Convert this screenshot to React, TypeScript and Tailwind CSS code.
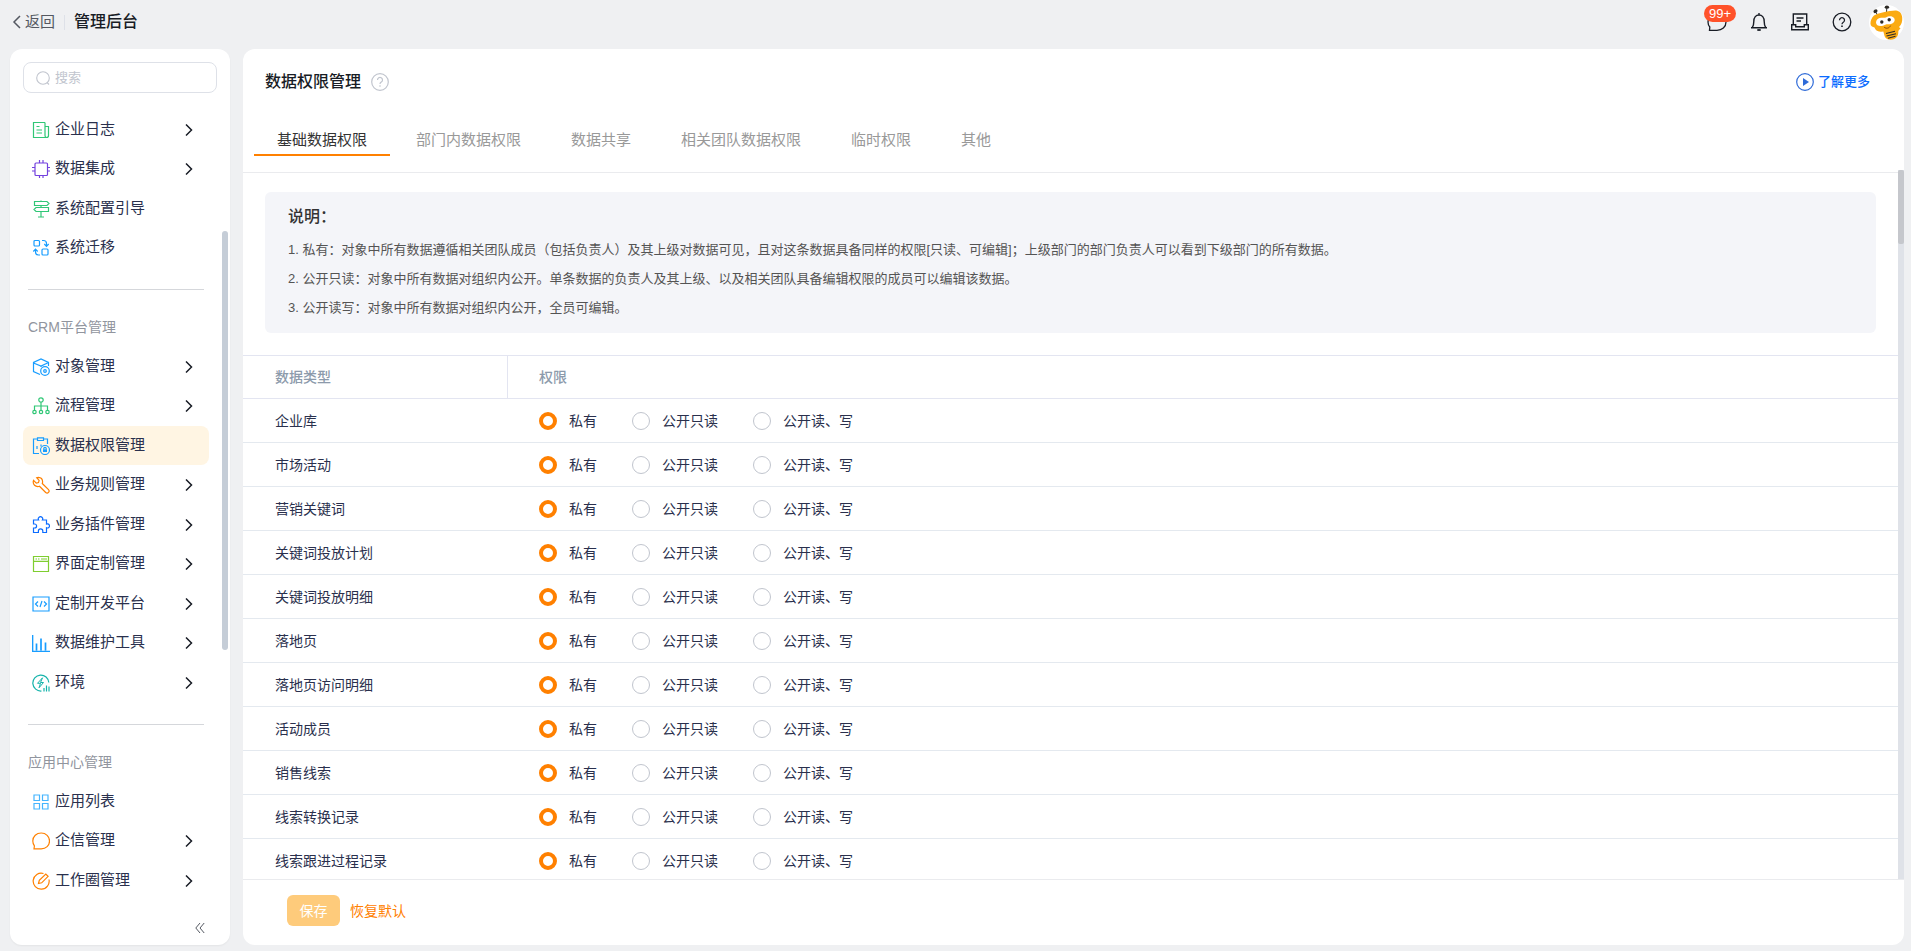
import { useState } from "react";
import type { ReactNode } from "react";
import clsx from "clsx";

type NavItem = {
  label: string;
  icon: ReactNode;
  color: string;
  arrow?: boolean;
  active?: boolean;
};

const icons = {
  log: (
    <>
      <path d="M13 1.5H1.5v15h13a2 2 0 0 0 2-2V5.5H13" />
      <path d="M13 1.5v13a2 2 0 0 0 1.500 2" />
      <path d="M4.500 5.500h3M4.500 9h5.500M4.500 12h5.500" />
    </>
  ),
  chip: (
    <>
      <rect x="3" y="3" width="12.500" height="12.500" rx="1" />
      <path d="M7.500 0v3M11 0v3M7.500 15.500v2.500M11 15.500v2.500M0 7.500h3M0 11h3M15.500 7.500H18M15.500 11H18" />
    </>
  ),
  sign: (
    <>
      <path d="M9 .5v1M2.500 1.500H15l2 2-2 2H2.500zM16.500 7.500H4l-2 2 2 2h12.500zM9 5.500v2M9 11.500V17M6 17h6" />
    </>
  ),
  migrate: (
    <>
      <rect x="2" y="1.500" width="5.500" height="5.500" rx="1" />
      <rect x="10" y="10" width="6" height="6" rx="1" />
      <path d="M10 1.500h1.500a3 3 0 0 1 3 3V7M12.300 5l2.200 2.300L16.700 5" />
      <path d="M8 16H6.500a3 3 0 0 1-3-3v-2.500M1.300 12.500l2.200-2.300 2.200 2.300" />
    </>
  ),
  object: (
    <>
      <path d="M16.500 8V4.500L9 1 1.500 4.500v9L8 16.500M1.500 5 9 8l7.500-3.500M9 8v1" />
      <circle cx="13" cy="13" r="4.300" />
      <circle cx="13" cy="13" r="1.300" />
    </>
  ),
  flow: (
    <>
      <circle cx="9" cy="3" r="2.200" />
      <circle cx="2.500" cy="15" r="1.700" />
      <circle cx="9" cy="15" r="1.700" />
      <circle cx="15.500" cy="15" r="1.700" />
      <path d="M9 5.200v8M2.500 13.200V9h13v4.200" />
    </>
  ),
  permission: (
    <>
      <path d="M5 2H1.500v14.500H7M12 2h3.500v5M5.500.800h6v2.700h-6zM5 9v3M9 7.500v2" />
      <circle cx="13" cy="13" r="4.500" />
      <rect x="11" y="12.300" width="4" height="2.700" fill="currentColor" strokeWidth="0" />
      <path d="M11.800 12.500v-1a1.200 1.200 0 0 1 2.400 0v1" />
    </>
  ),
  wrench: (
    <path d="M6.300 1.300C8.800 1.400 10.600 3.300 10.600 5.800c0 .6-.1 1.200-.3 1.700l6.200 6.200c1.700 1.900-.8 4.500-2.800 2.800L7.500 10.300c-.5.200-1.100.3-1.700.3-2.600 0-4.600-2-4.600-4.500 0-.6.100-1.200.3-1.700L4.300 7.200l2.200-.6.600-2.200L4.600 1.700c.5-.3 1.100-.4 1.700-.4z" />
  ),
  puzzle: (
    <path d="M1.500 4H6.600A2.200 2.200 0 1 1 10.400 4H14.500V8A2.100 2.100 0 1 1 14.500 11.800V16.500H10.800V15A2.200 2.200 0 0 0 6.400 15V16.500H1.500V12H2.600A2 2 0 0 0 2.600 8H1.500Z" />
  ),
  window: (
    <>
      <path d="M1.500 1.500h15v15h-15zM1.500 6.300h15" />
      <path d="M3.500 4h1.500M6 4h1.500M9 4h6" />
    </>
  ),
  code: (
    <>
      <path d="M1 2h16v14H1z" />
      <path d="M6 6.500 3.500 9 6 11.500M12 6.500 14.500 9 12 11.500M10 6l-2 6" />
    </>
  ),
  chart: (
    <path
      d="M.5 1v16.500H18M4.500 16.500V9.500M9 16.500V4.500M13.500 16.500V8.500"
      strokeWidth="1.700"
    />
  ),
  env: (
    <>
      <path d="M9.500 17A8 8 0 1 1 16.800 8.500" />
      <path d="M10.500 3.800 5.500 9.300h3L7 13.800M7 13.800 11.500 8.500h-3L10.500 3.800" strokeWidth="1" />
      <path d="M12 14v3.500M14.500 11.500v6M17 12.500v5" />
    </>
  ),
  grid: (
    <path d="M2 2h5.500v5.500H2zM10.500 2H16v5.500h-5.500zM2 10.500h5.500V16H2zM10.500 10.500H16V16h-5.500z" />
  ),
  chat: (
    <path d="M2 16.800h7.200C14 16.800 17.500 13.500 17.500 9S14 1 9.200 1C4.500 1 .8 4.300.8 9c0 2 .6 3.500 1.600 4.800z" />
  ),
  edit: (
    <>
      <path d="M11.500 1.500A8 8 0 1 0 17 7.500" />
      <path d="m6.500 11.500.8-3.200 6.500-6.300 2.300 2.300-6.400 6.500z" />
    </>
  ),
};

const groups: { title?: string; items: NavItem[] }[] = [
  {
    items: [
      { label: "企业日志", icon: icons.log, color: "text-[#30c776]", arrow: true },
      { label: "数据集成", icon: icons.chip, color: "text-[#7341de]", arrow: true },
      { label: "系统配置引导", icon: icons.sign, color: "text-[#30c776]" },
      { label: "系统迁移", icon: icons.migrate, color: "text-[#189dff]" },
    ],
  },
  {
    title: "CRM平台管理",
    items: [
      { label: "对象管理", icon: icons.object, color: "text-[#189dff]", arrow: true },
      { label: "流程管理", icon: icons.flow, color: "text-[#30c776]", arrow: true },
      { label: "数据权限管理", icon: icons.permission, color: "text-[#189dff]", active: true },
      { label: "业务规则管理", icon: icons.wrench, color: "text-[#ff8000]", arrow: true },
      { label: "业务插件管理", icon: icons.puzzle, color: "text-[#0c6cff]", arrow: true },
      { label: "界面定制管理", icon: icons.window, color: "text-[#7fce30]", arrow: true },
      { label: "定制开发平台", icon: icons.code, color: "text-[#189dff]", arrow: true },
      { label: "数据维护工具", icon: icons.chart, color: "text-[#189dff]", arrow: true },
      { label: "环境", icon: icons.env, color: "text-[#16b4ab]", arrow: true },
    ],
  },
  {
    title: "应用中心管理",
    items: [
      { label: "应用列表", icon: icons.grid, color: "text-[#45b5ff]" },
      { label: "企信管理", icon: icons.chat, color: "text-[#ff8000]", arrow: true },
      { label: "工作圈管理", icon: icons.edit, color: "text-[#ff8000]", arrow: true },
    ],
  },
];

const tabs = ["基础数据权限", "部门内数据权限", "数据共享", "相关团队数据权限", "临时权限", "其他"];

const notes = [
  "1. 私有：对象中所有数据遵循相关团队成员（包括负责人）及其上级对数据可见，且对这条数据具备同样的权限[只读、可编辑]；上级部门的部门负责人可以看到下级部门的所有数据。",
  "2. 公开只读：对象中所有数据对组织内公开。单条数据的负责人及其上级、以及相关团队具备编辑权限的成员可以编辑该数据。",
  "3. 公开读写：对象中所有数据对组织内公开，全员可编辑。",
];

const rows = [
  "企业库",
  "市场活动",
  "营销关键词",
  "关键词投放计划",
  "关键词投放明细",
  "落地页",
  "落地页访问明细",
  "活动成员",
  "销售线索",
  "线索转换记录",
  "线索跟进过程记录",
];

const options = ["私有", "公开只读", "公开读、写"];

const Bee = () => (
  <svg viewBox="0 0 35 35" className="size-[35px]">
    <circle cx="17.500" cy="17.500" r="17.500" fill="#fff" />
    <path d="M6.500 6.500 9 11M17.800 2.500 17.500 8" stroke="#333" strokeWidth="1" fill="none" />
    <ellipse cx="6.500" cy="6.200" rx="2.200" ry="1.700" fill="#2d2a26" transform="rotate(-35 6.500 6.200)" />
    <ellipse cx="17.900" cy="2.200" rx="2.200" ry="1.600" fill="#2d2a26" />
    <path d="M14 25l13-5c1.500 1.500 3.500 2 4.500 3.500-1 1-1.800 1.500-2.200 2.800.3 3.500-1 6.200-4 7.700-3.500 1.200-7 .8-9-1.500-1-1.500-1.300-4-2.300-7.500z" fill="#fbab12" />
    <path d="M1.500 19c-.3-3 1.200-6.500 3.500-8.500C8.500 8.300 21 5.300 27 5.500c3.500.3 5.800 3 6.200 7 .3 4-.7 7-2.700 9-4 3-14 5.500-19 5.200-3.700-.3-4.900-1.700-6-4.200-1.500-.5-3.800-1-4-3.500z" fill="#fbab12" />
    <path d="M7 17.500c0-2.500 2-4.300 5-4.700 2-.2 3 .3 5-.4 2.200-1.200 6.200-1.800 8 .6 1.600 2.200.3 5.200-3 6-2.500.6-3.700-.2-5.700.7-3.600 2.200-9.300 1.800-9.300-2.200z" fill="#fff" />
    <circle cx="12.800" cy="17" r="1.700" fill="#2d2a26" />
    <circle cx="20.200" cy="14.700" r="1.700" fill="#2d2a26" />
    <path d="M15.500 22.500c2 1.500 4.700.8 5.900-1.500" stroke="#8a4b0a" strokeWidth="1" fill="none" strokeLinecap="round" />
    <path d="M17 28.500 26 26.300M17.500 31 27 28.700M19 33.200 26.500 31.200" stroke="#2d2a26" strokeWidth="1.100" fill="none" />
  </svg>
);

const TopBar = () => (
  <header className="flex h-[49px] shrink-0 items-start justify-between pl-3 pr-[7px]">
    <div className="flex h-[44px] items-center">
      <button type="button" className="flex items-center gap-1 text-[15px] text-[#545861]">
        <svg viewBox="0 0 9 14" className="h-[14px] w-[9px]" fill="none" stroke="currentColor" strokeWidth="1.500">
          <path d="M8 1 2 7l6 6" />
        </svg>
        返回
      </button>
      <span className="ml-[9px] h-[15px] w-px bg-[#dee1e8]" />
      <h1 className="ml-[9px] text-base font-medium text-[#181c25]">管理后台</h1>
    </div>
    <div className="flex h-[44px] items-center text-[#181c25]">
      <button type="button" aria-label="消息" className="relative mr-[22px] size-5">
        <svg viewBox="0 0 20 20" className="size-5" fill="none" stroke="currentColor" strokeWidth="1.300">
          <path d="M2.500 18.300H10c5 0 9-3.300 9-8.300s-4-8-9-8-9 3.300-9 8c0 2 .7 3.800 1.800 5z" />
        </svg>
        <span className="absolute -left-[3px] -top-[7px] flex h-[17px] items-center rounded-full bg-[#ff522a] px-[5px] text-[13px] text-white">
          99+
        </span>
      </button>
      <button type="button" aria-label="通知" className="mr-[21px]">
        <svg viewBox="0 0 20 20" className="size-5" fill="none" stroke="currentColor" strokeWidth="1.400">
          <path d="M10 1v2M2 15.700h16M3.300 15.500c1.300-2 1.500-3.500 1.500-6C4.800 5.500 7 3 10 3s5.200 2.500 5.200 6.500c0 2.500.2 4 1.500 6" />
          <path d="M8.300 18h3.400" strokeWidth="1.800" />
        </svg>
      </button>
      <button type="button" aria-label="待办" className="mr-[22px]">
        <svg viewBox="0 0 20 20" className="size-5" fill="none" stroke="currentColor" strokeWidth="1.400">
          <path d="M3.300 12.500V2h13.400v10.500M6.500 6h7M6.500 9h4.500M1.700 12.700h4v2h8.600v-2h4v5H1.700z" />
        </svg>
      </button>
      <button type="button" aria-label="帮助" className="mr-[17px]">
        <svg viewBox="0 0 20 20" className="size-5" fill="none" stroke="currentColor" strokeWidth="1.300">
          <circle cx="10" cy="10" r="8.800" />
          <path d="M7.500 8.200a2.500 2.500 0 1 1 3.800 2.100c-.8.500-1.300 1-1.300 2" />
          <path d="M10 13.500v1.500" strokeWidth="1.600" />
        </svg>
      </button>
      <button type="button" aria-label="头像">
        <Bee />
      </button>
    </div>
  </header>
);

const Sidebar = () => (
  <aside className="relative flex w-[220px] shrink-0 flex-col overflow-hidden rounded-xl bg-white px-[13px] pt-[13px] shadow-xs">
    <label className="flex h-[31px] shrink-0 items-center gap-[5px] rounded-lg border border-[#dee1e8] px-3 text-[#c1c5ce]">
      <svg viewBox="0 0 14 14" className="size-[14px] shrink-0" fill="none" stroke="currentColor" strokeWidth="1.100">
        <circle cx="7" cy="7" r="6.300" />
        <path d="m11 11.500 2 2" />
      </svg>
      <input type="text" placeholder="搜索" className="min-w-0 flex-1 text-[13px] outline-none placeholder:text-[#c1c5ce]" />
    </label>
    <nav className="mt-[17px] min-h-0 flex-1 overflow-hidden">
      {groups.map((group, i) => (
        <div key={i}>
          {group.title && (
            <>
              <hr className="ml-[5px] mr-[13px] mt-[22px] border-[#d5d7db]" />
              <h2 className="mb-[10px] ml-[5px] mt-[27px] text-sm text-[#91959e]">{group.title}</h2>
            </>
          )}
          <ul>
            {group.items.map((item) => (
              <li key={item.label} className="mr-2 even:mb-px">
                <a
                  href="#"
                  className={clsx(
                    "flex h-[39px] items-center gap-[5px] rounded-lg pl-[9px] pr-4 text-[15px] text-[#2a304d]",
                    item.active && "bg-[#fff5e3]"
                  )}
                >
                  <svg
                    viewBox="0 0 18 18"
                    className={clsx("size-[18px] shrink-0", item.color)}
                    fill="none"
                    stroke="currentColor"
                    strokeWidth="1.200"
                  >
                    {item.icon}
                  </svg>
                  <span className="flex-1">{item.label}</span>
                  {item.arrow && (
                    <svg viewBox="0 0 8 12" className="h-3 w-2" fill="none" stroke="#181c25" strokeWidth="1.500">
                      <path d="m1 .5 5.500 5.500L1 11.500" />
                    </svg>
                  )}
                </a>
              </li>
            ))}
          </ul>
        </div>
      ))}
    </nav>
    <button type="button" aria-label="收起" className="mb-3 mr-3 self-end">
      <svg viewBox="0 0 10 10" className="size-[10px]" fill="none" stroke="#545861" strokeWidth="1">
        <path d="M5 0 .8 5 5 10M9.200 0 5 5l4.200 5" />
      </svg>
    </button>
    <div className="absolute right-[2px] top-[182px] h-[419px] w-[6px] rounded-full bg-[#c5cdd7]" />
  </aside>
);

const PermissionTable = () => {
  const [values, setValues] = useState<Record<string, string>>({});

  return (
    <table className="mt-[22px] w-full border-separate border-spacing-0 text-left text-sm text-[#2a304d]">
      <thead>
        <tr className="text-[#8c9aab]">
          <th className="h-[44px] w-[265px] border-y border-r border-[#e3e5f1] p-0 pl-8 font-medium">数据类型</th>
          <th className="h-[44px] border-y border-[#e3e5f1] p-0 pl-[31px] font-medium">权限</th>
        </tr>
      </thead>
      <tbody>
        {rows.map((row) => (
          <tr key={row}>
            <td className="h-[44px] border-b border-[#e4e9ef] p-0 pl-8">{row}</td>
            <td className="h-[44px] border-b border-[#e4e9ef] p-0 pl-[31px]">
              <div className="flex items-center gap-[35px]">
                {options.map((option) => (
                  <label key={option} className="flex items-center gap-3">
                    <input
                      type="radio"
                      name={row}
                      checked={(values[row] ?? "私有") === option}
                      onChange={() => setValues({ ...values, [row]: option })}
                      className="size-[18px] appearance-none rounded-full border border-[#c1c5ce] bg-white checked:border-4 checked:border-[#ff8000]"
                    />
                    {option}
                  </label>
                ))}
              </div>
            </td>
          </tr>
        ))}
      </tbody>
    </table>
  );
};

const App = () => {
  const [tab, setTab] = useState(tabs[0]);

  return (
    <div className="flex h-screen flex-col overflow-hidden bg-[#eff0f2] font-['Liberation_Sans','Noto_Sans_CJK_SC',sans-serif]">
      <TopBar />
      <div className="flex min-h-0 flex-1 gap-[13px] pb-[6px] pl-[10px] pr-[7px]">
        <Sidebar />
        <main className="flex min-w-0 flex-1 flex-col overflow-hidden rounded-xl bg-white">
          <div className="flex h-[65px] shrink-0 items-center justify-between pl-[22px] pr-[34px]">
            <div className="flex items-center gap-[10px]">
              <h2 className="text-base font-medium text-[#181c25]">数据权限管理</h2>
              <svg viewBox="0 0 18 18" className="size-[18px]" fill="none" stroke="#c1c5ce" strokeWidth="1.200">
                <circle cx="9" cy="9" r="8.300" />
                <path d="M6.500 7a2.500 2.500 0 1 1 3.800 2.100C9.300 9.700 9 10 9 11M9 12.300v1.400" />
              </svg>
            </div>
            <a href="#" className="flex items-center gap-1 text-[13px] font-medium text-[#0c6cff]">
              <svg viewBox="0 0 18 18" className="size-[18px]" fill="none" stroke="#2f6bd8" strokeWidth="1.200">
                <circle cx="9" cy="9" r="8.300" />
                <path d="M7 5v8l6-4z" fill="#2f6bd8" strokeWidth="0" />
              </svg>
              了解更多
            </a>
          </div>
          <div role="tablist" className="mb-[14px] flex shrink-0 gap-[2px] pl-[11px]">
            {tabs.map((name) => (
              <button
                key={name}
                type="button"
                role="tab"
                aria-selected={tab === name}
                onClick={() => setTab(name)}
                className={clsx(
                  "h-[42px] border-b-2 px-[23px] pt-3 text-[15px] not-first:px-6",
                  tab === name ? "border-[#ff8000] text-[#333333]" : "border-transparent text-[#999999]"
                )}
              >
                {name}
              </button>
            ))}
          </div>
          <div className="flex min-h-0 flex-1">
            <div className="min-w-0 flex-1 overflow-hidden pt-[2px]">
              <div className="border-t border-[#eaebee] pt-[19px]">
                <section className="mx-[22px] rounded-md bg-[#f4f5f9] px-[23px] py-[11px] text-[#545454]">
                  <h3 className="mb-1 text-base leading-7 font-medium text-[#333333]">说明：</h3>
                  {notes.map((note) => (
                    <p key={note} className="text-[13px] leading-[29px]">
                      {note}
                    </p>
                  ))}
                </section>
                <PermissionTable />
              </div>
            </div>
            <div className="w-[6px] bg-[#dfe2e8]">
              <div className="h-[74px] rounded-xs bg-[#c5c7cc]" />
            </div>
          </div>
          <footer className="flex shrink-0 items-center gap-[10px] border-t border-[#eaebee] pb-[19px] pl-11 pt-[15px] text-sm">
            <button type="button" className="h-[31px] w-[53px] rounded-md bg-[#fecb7b] text-white">
              保存
            </button>
            <button type="button" className="text-[#ff8000]">
              恢复默认
            </button>
          </footer>
        </main>
      </div>
    </div>
  );
};

export default App;
